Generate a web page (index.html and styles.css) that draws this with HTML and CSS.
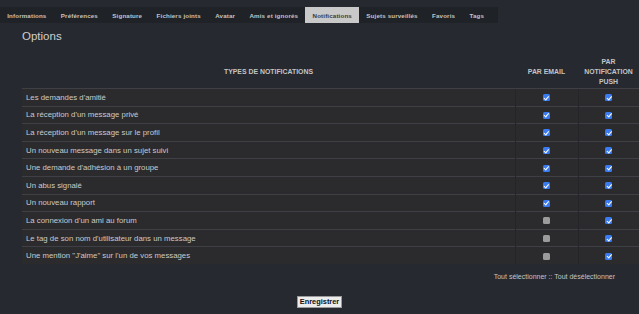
FILE: index.html
```html
<!DOCTYPE html>
<html lang="fr">
<head>
<meta charset="utf-8">
<title>Notifications</title>
<link rel="stylesheet" href="styles.css">
</head>
<body>
<nav class="tabs">
  <span class="tab">Informations</span>
  <span class="tab">Préférences</span>
  <span class="tab">Signature</span>
  <span class="tab">Fichiers joints</span>
  <span class="tab">Avatar</span>
  <span class="tab">Amis et ignorés</span>
  <span class="tab active">Notifications</span>
  <span class="tab">Sujets surveillés</span>
  <span class="tab">Favoris</span>
  <span class="tab">Tags</span>
</nav>
<h2 class="title">Options</h2>
<table class="notif">
  <thead>
    <tr>
      <th class="c-type">TYPES DE NOTIFICATIONS</th>
      <th class="c-mail">PAR EMAIL</th>
      <th class="c-push">PAR<br>NOTIFICATION<br>PUSH</th>
    </tr>
  </thead>
  <tbody>
    <tr><td>Les demandes d'amitié</td><td class="cb"><span class="box on"></span></td><td class="cb"><span class="box on"></span></td></tr>
    <tr><td>La réception d'un message privé</td><td class="cb"><span class="box on"></span></td><td class="cb"><span class="box on"></span></td></tr>
    <tr><td>La réception d'un message sur le profil</td><td class="cb"><span class="box on"></span></td><td class="cb"><span class="box on"></span></td></tr>
    <tr><td>Un nouveau message dans un sujet suivi</td><td class="cb"><span class="box on"></span></td><td class="cb"><span class="box on"></span></td></tr>
    <tr><td>Une demande d'adhésion à un groupe</td><td class="cb"><span class="box on"></span></td><td class="cb"><span class="box on"></span></td></tr>
    <tr><td>Un abus signalé</td><td class="cb"><span class="box on"></span></td><td class="cb"><span class="box on"></span></td></tr>
    <tr><td>Un nouveau rapport</td><td class="cb"><span class="box on"></span></td><td class="cb"><span class="box on"></span></td></tr>
    <tr><td>La connexion d'un ami au forum</td><td class="cb"><span class="box"></span></td><td class="cb"><span class="box on"></span></td></tr>
    <tr><td>Le tag de son nom d'utilisateur dans un message</td><td class="cb"><span class="box"></span></td><td class="cb"><span class="box on"></span></td></tr>
    <tr><td>Une mention "J'aime" sur l'un de vos messages</td><td class="cb"><span class="box"></span></td><td class="cb"><span class="box on"></span></td></tr>
  </tbody>
</table>
<div class="select-links">Tout sélectionner :: Tout désélectionner</div>
<div class="actions"><button class="save" type="button">Enregistrer</button></div>
</body>
</html>
```
FILE: styles.css
```css
html, body {
  margin: 0;
  padding: 0;
  background: #262930;
  font-family: "Liberation Sans", Arial, sans-serif;
  color: #c8c8c8;
}
.tabs {
  display: inline-flex;
  align-items: stretch;
  margin-top: 7px;
  height: 16px;
  background: #1f2227;
  padding: 0 7px 0 0;
}
.tab {
  display: flex;
  align-items: center;
  padding: 0 7.2px;
  font-size: 6.2px;
  font-weight: bold;
  color: #c4c4c4;
  letter-spacing: 0.15px;
}
.tab.active {
  background: #c9c9c9;
  color: #3a3a3a;
}
.title {
  margin: 6px 0 0 22px;
  font-size: 11.5px;
  font-weight: normal;
  color: #cfcfcf;
  height: 26px;
  line-height: 14px;
}
.notif {
  margin-left: 22px;
  width: 617px;
  border-collapse: collapse;
  font-size: 7.8px;
}
.notif th {
  height: 33px;
  padding: 0;
  font-size: 6.9px;
  font-weight: bold;
  color: #c4c4c4;
  text-align: center;
  vertical-align: middle;
  line-height: 10px;
}
.c-type { width: 493px; }
.c-mail { width: 63px; }
.notif td {
  height: 16.6px;
  padding: 0 0 0 4px;
  background: #2b2b2d;
  border-top: 1px solid #3e4045;
  color: #cacaca;
  vertical-align: middle;
}
.notif td + td {
  border-left: 1px solid #242529;
}
.notif td.cb {
  padding: 0;
  text-align: center;
}
.box {
  display: inline-block;
  width: 7px;
  height: 7px;
  border-radius: 1.5px;
  background: #9b9b9b;
  vertical-align: middle;
  position: relative;
}
.box.on {
  background: #3a7bf0;
}
.box.on::after {
  content: "";
  position: absolute;
  left: 2.3px;
  top: 0.6px;
  width: 1.6px;
  height: 3.6px;
  border: solid #ffffff;
  border-width: 0 1.1px 1.1px 0;
  transform: rotate(40deg);
}
.select-links {
  text-align: right;
  padding-right: 24px;
  margin-top: 8px;
  font-size: 7px;
  color: #c4c4c4;
  height: 10px;
  line-height: 10px;
}
.actions {
  display: flex;
  justify-content: center;
  margin-top: 14px;
}
.save {
  font-family: "Liberation Sans", Arial, sans-serif;
  font-size: 7.4px;
  font-weight: bold;
  color: #111;
  background: #ececec;
  border: 1px solid #9a9a9a;
  padding: 1px 2px;
  height: 12px;
  line-height: 8px;
  border-radius: 0;
}
```
